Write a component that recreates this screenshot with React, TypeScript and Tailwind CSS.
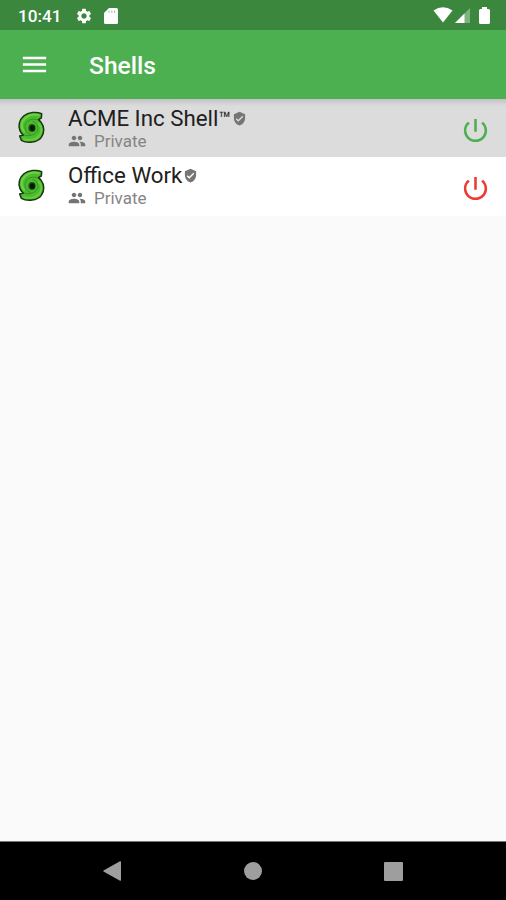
import React from "react";
import { MdMenu, MdPeople, MdPowerSettingsNew, MdSettings, MdVerifiedUser } from "react-icons/md";

function ShellLogo() {
  return (
    <svg viewBox="21 30 84 102" className="mt-[11px] ml-[17px] h-[34px] w-7 shrink-0">
      <path
        d="M95 41C80 35 55 36 41 48C27 60 24 78 30 92C33 99 37 103 40 105L29 108L34 121C52 131 82 128 94 112C104 98 103 80 94 68C91 64 88 61 85 59L94 54Z"
        fill="#4dba30"
        stroke="#17350f"
        strokeWidth="4.500"
        strokeLinejoin="round"
      />
      <path d="M86 45C64 40 44 50 37 66C33 77 36 87 42 95" fill="none" stroke="#6ad443" strokeWidth="6" strokeLinecap="round" />
      <path d="M42 118C63 123 84 117 92 101C96 89 93 78 87 72" fill="none" stroke="#62cd3d" strokeWidth="6" strokeLinecap="round" />
      <path d="M82 59C61 53 44 65 45 82C46 93 53 101 62 103" fill="none" stroke="#2f8a20" strokeWidth="2.500" />
      <path d="M42 105C62 111 82 102 84 86C84 75 77 67 68 64" fill="none" stroke="#2f8a20" strokeWidth="2.500" />
      <ellipse cx="66" cy="84" rx="11" ry="12" fill="#1d5a14" />
      <ellipse cx="67" cy="84" rx="7.500" ry="8.500" fill="#061a05" />
    </svg>
  );
}

function ShellRow({ name, trademark = false, active = false }: { name: string; trademark?: boolean; active?: boolean }) {
  return (
    <li
      className={
        active
          ? "flex h-[58px] bg-gradient-to-b from-[#c2c2c6] to-[#dcdcdc] to-[7px]"
          : "flex h-[59px] bg-white"
      }
    >
      <ShellLogo />
      <div className={active ? "ml-[23px] flex-1 pt-[5px]" : "ml-[23px] flex-1 pt-1"}>
        <div className="flex h-7 items-center text-[22.3px] leading-7 text-[#202020]">
          <span className="whitespace-nowrap">
            {name}
            {trademark && <span className="text-[20px]">™</span>}
          </span>
          <MdVerifiedUser className="ml-px h-[15px] w-[15px] text-[#767676]" />
        </div>
        <div className="flex h-[18px] items-center text-[17px] leading-[18px] text-[#858585]">
          <MdPeople className="h-[18px] w-[18px] text-[#747474]" />
          <span className="ml-2">Private</span>
        </div>
      </div>
      <MdPowerSettingsNew
        className={
          active
            ? "mt-4 mr-[15px] h-[31px] w-[31px] text-[#4caf50]"
            : "mt-4 mr-[15px] h-[31px] w-[31px] text-[#f03a30]"
        }
      />
    </li>
  );
}

export default function App() {
  return (
    <div className="flex h-[900px] w-[506px] flex-col overflow-hidden bg-[#fafafa] font-['Roboto',sans-serif]">
      <div className="flex h-[30px] shrink-0 items-center bg-[#3b873e] pl-[18px] text-white">
        <span className="mt-px w-[57px] text-[17.2px] leading-5 font-medium">10:41</span>
        <MdSettings className="mt-px h-[18px] w-[18px]" />
        <svg viewBox="0 0 14 16" className="mt-px ml-[11px] h-4 w-3.5" fill="currentColor">
          <path d="M5 0h7.5Q14 0 14 1.5v13q0 1.500-1.500 1.500H1.500Q0 16 0 14.500V5z" />
          <path d="M5 2.500v2.500M7.800 2.500v2.500M10.600 2.500v2.500" stroke="#3b873e" strokeWidth="0.800" opacity="0.6" />
        </svg>
        <div className="mr-4 ml-auto flex items-center">
          <svg viewBox="0 0 20 16" className="h-4 w-5" fill="currentColor">
            <path d="M0.500 3.500Q10-3 19.500 3.500L10 15.500z" />
          </svg>
          <svg viewBox="0 0 15 16" className="ml-[2px] h-4 w-[15px]" fill="currentColor">
            <path d="M0 16L15 1v15z" opacity="0.35" />
            <path d="M0 16L9.500 6.500V16z" />
          </svg>
          <svg viewBox="0 0 11 17" className="ml-[9px] h-[17px] w-[11px]" fill="currentColor">
            <path d="M3 0h5v2h1.500Q11 2 11 3.500v12q0 1.500-1.500 1.500h-8Q0 17 0 15.500v-12Q0 2 1.500 2H3z" />
          </svg>
        </div>
      </div>
      <header className="flex h-[69px] shrink-0 items-center bg-[#4caf50] pl-[19px] text-white">
        <MdMenu className="h-[31px] w-[31px]" />
        <h1 className="mt-[2px] ml-[39px] text-[24.6px] leading-8 font-medium">Shells</h1>
      </header>
      <ul className="flex-1">
        <ShellRow name="ACME Inc Shell" trademark active />
        <ShellRow name="Office Work" />
      </ul>
      <nav className="flex h-[59px] shrink-0 items-center border-t border-[#777] bg-black text-[#9e9e9e]">
        <svg viewBox="0 0 18 20" className="ml-[103px] h-5 w-[18px]" fill="currentColor">
          <path d="M17 0.300Q18 0 18 1v18q0 1-1 .700L.500 10.500Q0 10 .500 9.500z" />
        </svg>
        <div className="ml-[123px] h-[18px] w-[18px] rounded-full bg-[#9e9e9e]" />
        <div className="ml-[122px] h-[19px] w-[19px] rounded-[1px] bg-[#9e9e9e]" />
      </nav>
    </div>
  );
}
